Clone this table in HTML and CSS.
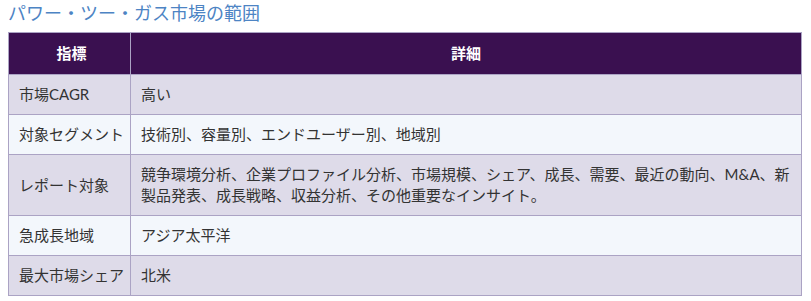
FILE: index.html
```html
<!DOCTYPE html>
<html lang="ja">
<head>
<meta charset="utf-8">
<link rel="stylesheet" href="styles.css">
</head>
<body>
<h3 class="title">パワー・ツー・ガス市場の範囲</h3>
<table class="scope">
  <thead>
    <tr><th class="c1">指標</th><th>詳細</th></tr>
  </thead>
  <tbody>
    <tr><td class="c1">市場CAGR</td><td>高い</td></tr>
    <tr><td class="c1">対象セグメント</td><td>技術別、容量別、エンドユーザー別、地域別</td></tr>
    <tr><td class="c1">レポート対象</td><td>競争環境分析、企業プロファイル分析、市場規模、シェア、成長、需要、最近の動向、M&amp;A、新製品発表、成長戦略、収益分析、その他重要なインサイト。</td></tr>
    <tr><td class="c1">急成長地域</td><td>アジア太平洋</td></tr>
    <tr><td class="c1">最大市場シェア</td><td>北米</td></tr>
  </tbody>
</table>
</body>
</html>
```
FILE: styles.css
```css
body {
  margin: 0 8px;
  background: #ffffff;
  font-family: Lato, "Noto Sans CJK JP", sans-serif;
  color: #333333;
}
.title {
  margin: 0 0 8px 0;
  font-size: 18px;
  line-height: 24px;
  font-weight: normal;
  color: #4d84c4;
  font-family: "Noto Sans CJK JP", sans-serif;
}
.scope {
  width: 794px;
  border-collapse: collapse;
  font-size: 15px;
  line-height: 21px;
  table-layout: fixed;
}
.scope th, .scope td {
  border: 1px solid #aba3c4;
  padding: 9px 10px;
  text-align: left;
  vertical-align: middle;
}
.scope th {
  background: #3a1050;
  color: #ffffff;
  font-weight: 600;
  text-align: center;
  padding: 10px 10px;
}
.scope .c1 {
  width: 105px;
  padding-right: 6px;
  white-space: nowrap;
}
.scope th.c1 {
  padding-right: 6px;
}
.scope tbody tr:nth-child(odd) td {
  background: #dedbe9;
}
.scope tbody tr:nth-child(even) td {
  background: #f3f7fc;
}
```
